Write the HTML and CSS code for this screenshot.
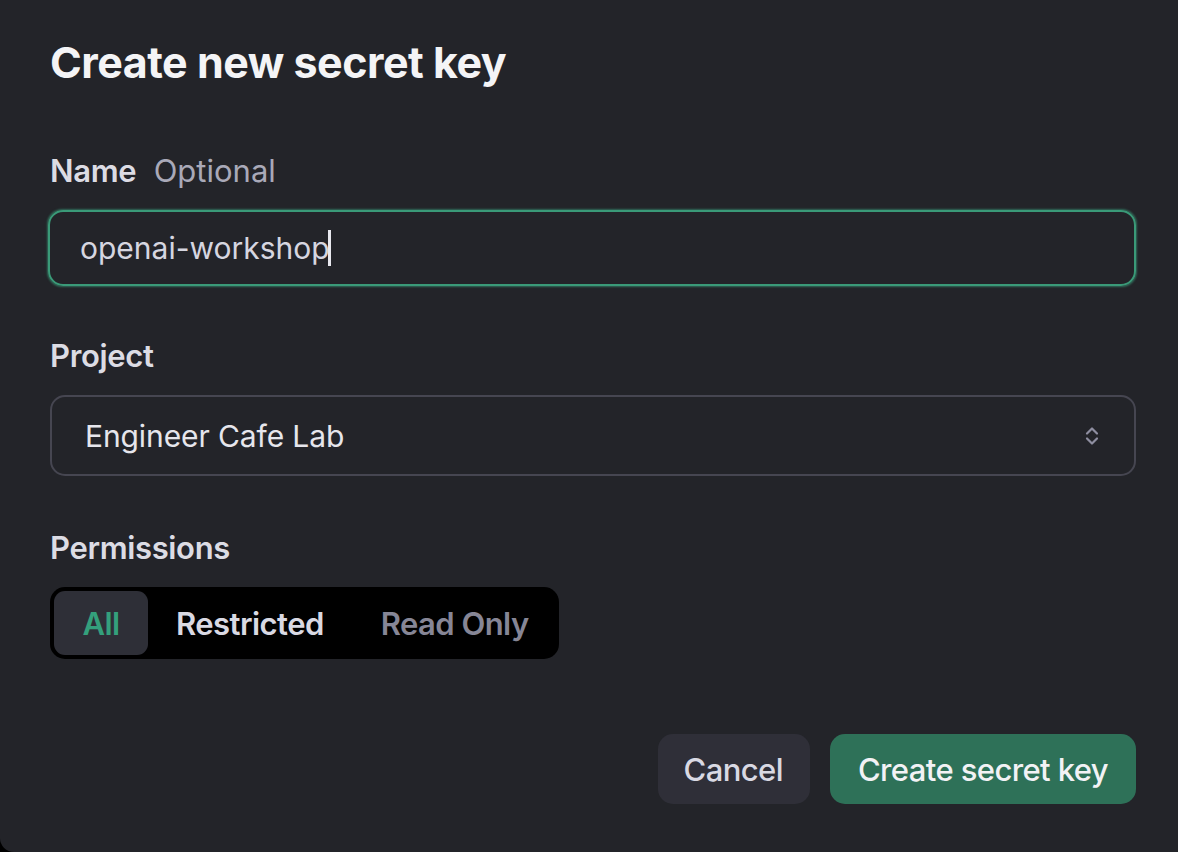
FILE: index.html
```html
<!DOCTYPE html>
<html lang="en">
<head>
<meta charset="utf-8">
<title>Create new secret key</title>
<link rel="stylesheet" href="styles.css">
</head>
<body>
<div class="dialog">
  <h1 class="title">Create new secret key</h1>

  <div class="field field-name">
    <label class="label">Name <span class="hint">Optional</span></label>
    <div class="input focused"><span class="value">openai-workshop</span><span class="caret"></span></div>
  </div>

  <div class="field field-project">
    <label class="label">Project</label>
    <div class="select">
      <span class="value select-value">Engineer Cafe Lab</span>
      <svg class="chevrons" width="16" height="24" viewBox="0 0 16 24" fill="none" stroke="#8e8ea0" stroke-width="2.2" stroke-linecap="round" stroke-linejoin="round">
        <path d="M3 9.5 L8 4.5 L13 9.5"/>
        <path d="M3 14.5 L8 19.5 L13 14.5"/>
      </svg>
    </div>
  </div>

  <div class="field field-perm">
    <label class="label">Permissions</label>
    <div class="segmented">
      <span class="seg seg-active">All</span>
      <span class="seg seg-restricted">Restricted</span>
      <span class="seg seg-readonly">Read Only</span>
    </div>
  </div>

  <div class="actions">
    <button class="btn btn-cancel">Cancel</button>
    <button class="btn btn-primary">Create secret key</button>
  </div>
</div>
</body>
</html>
```

FILE: styles.css
```css
html, body {
  margin: 0;
  padding: 0;
  background: #000;
}

body {
  font-family: Inter, "Noto Sans", "DejaVu Sans", sans-serif;
  color: #ececf1;
}

.dialog {
  box-sizing: border-box;
  width: 1178px;
  height: 852px;
  background: #232429;
  border-bottom-left-radius: 14px;
  padding: 36px 42px 0 50px;
  display: flex;
  flex-direction: column;
}

.title {
  margin: 0;
  font-size: 43px;
  line-height: 52px;
  font-weight: 700;
  letter-spacing: -0.5px;
  color: #f4f4f6;
}

.field {
  display: flex;
  flex-direction: column;
}

.label {
  font-size: 31px;
  line-height: 38px;
  font-weight: 600;
  letter-spacing: -0.35px;
  color: #dcdce4;
  margin-bottom: 20px;
}

.hint {
  font-weight: 400;
  letter-spacing: 0;
  color: #a9a9b8;
  margin-left: 10px;
}

.field-name { margin-top: 64px; }
.field-project { margin-top: 51px; }
.field-perm { margin-top: 53px; }

.input {
  box-sizing: border-box;
  height: 76px;
  margin-left: -2px;
  border: 2.5px solid #3a9a78;
  border-radius: 15px;
  box-shadow: 0 0 2px 0.5px rgba(58, 154, 120, 0.6);
  display: flex;
  align-items: center;
  padding-left: 30px;
}

.value {
  font-size: 30px;
  font-weight: 400;
  color: #d6d6e0;
}

.caret {
  width: 3px;
  height: 36px;
  background: #e8e8ee;
  margin-left: -2px;
}

.select {
  box-sizing: border-box;
  height: 81px;
  border: 2px solid #464651;
  border-radius: 15px;
  display: flex;
  align-items: center;
  justify-content: space-between;
  padding: 0 34px 0 33px;
}

.select-value {
  font-size: 30px;
  letter-spacing: -0.1px;
  color: #e6e6ec;
}

.chevrons { display: block; }

.segmented {
  align-self: flex-start;
  box-sizing: border-box;
  height: 72px;
  padding: 4px;
  background: #000;
  border-radius: 15px;
  display: flex;
}

.seg {
  display: flex;
  align-items: center;
  justify-content: center;
  font-size: 31px;
  font-weight: 600;
  letter-spacing: -0.55px;
  border-radius: 11px;
}

.seg-active {
  width: 94px;
  background: #2e2f37;
  color: #34a07c;
}

.seg-restricted {
  padding: 0 28px;
  color: #d9d9e3;
}

.seg-readonly {
  padding: 0 26px 0 29px;
  color: #868696;
}

.actions {
  margin-top: 75px;
  display: flex;
  justify-content: flex-end;
  gap: 20px;
}

.btn {
  height: 70px;
  border: none;
  border-radius: 15px;
  font-family: inherit;
  font-size: 31px;
  font-weight: 500;
  letter-spacing: -0.6px;
  padding: 0 28px;
}

.btn-cancel {
  padding: 0 27px 0 26px;
  background: #2f2f38;
  color: #d9d9e3;
}

.btn-primary {
  background: #2e7158;
  color: #f2f2f5;
}
```
